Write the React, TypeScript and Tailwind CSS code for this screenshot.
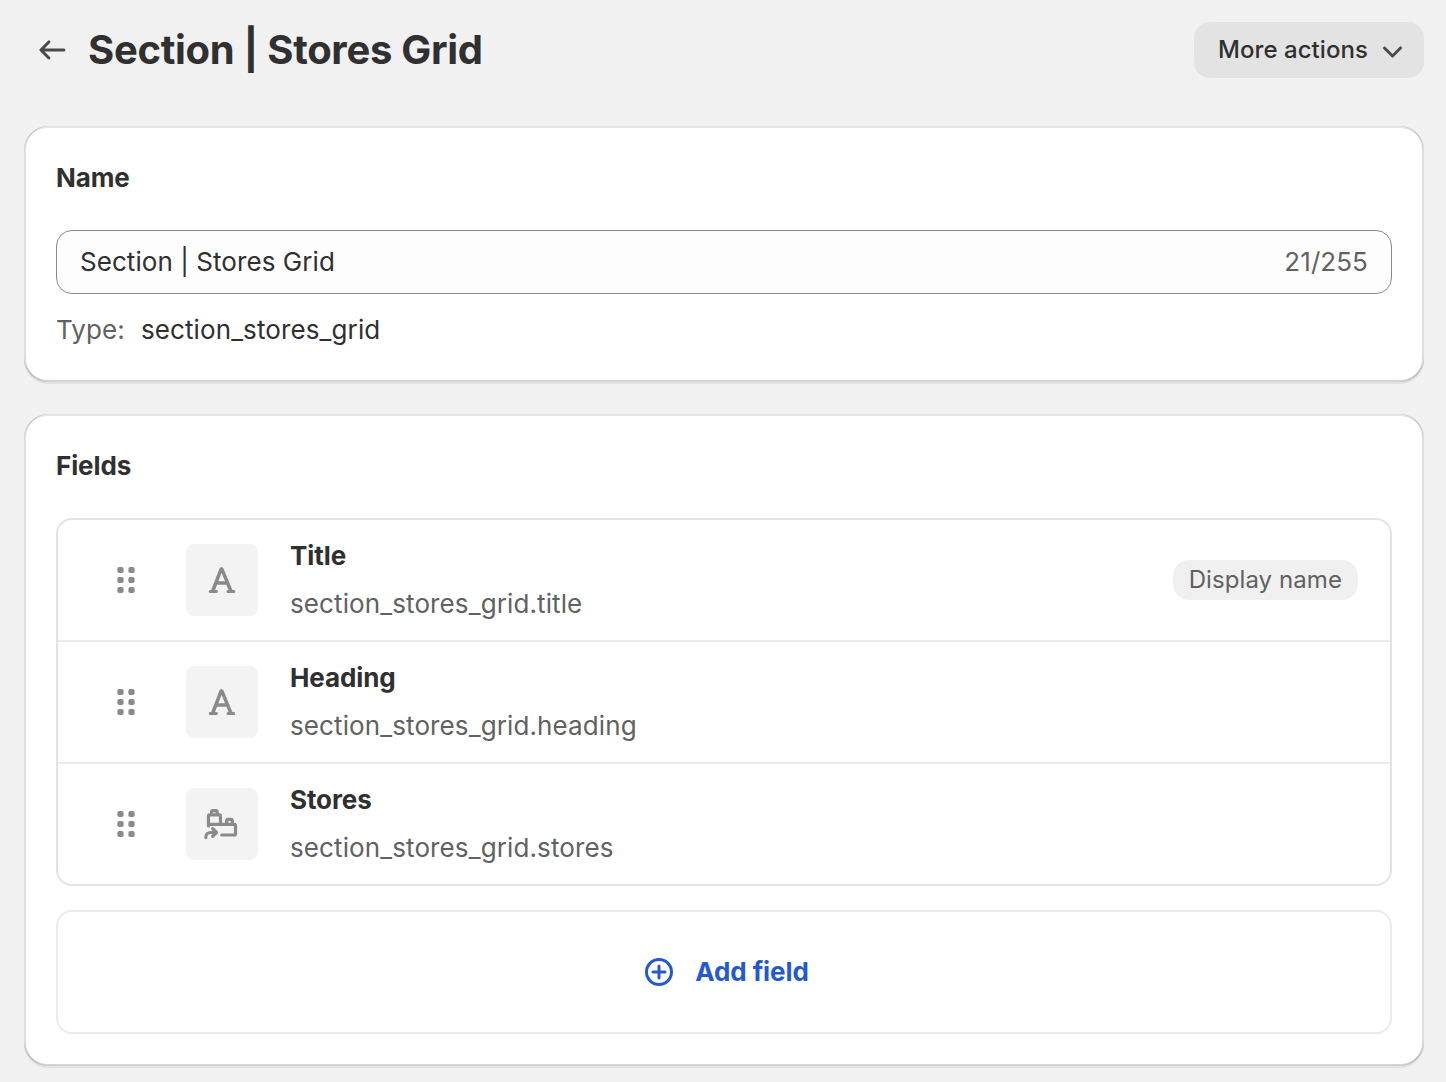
import type { ReactNode } from "react";

const cardClass =
  "rounded-[24px] bg-white px-8 shadow-[0_2px_0_0_rgba(26,26,26,0.07),inset_2px_0_0_0_rgba(0,0,0,0.13),inset_-2px_0_0_0_rgba(0,0,0,0.13),inset_0_-2px_0_0_rgba(0,0,0,0.17),inset_0_2px_0_0_rgba(204,204,204,0.5)]";

function ArrowLeftIcon() {
  return (
    <svg viewBox="0 0 20 20" className="size-10 shrink-0" fill="#4a4a4a">
      <path d="M16.7 10a.75.75 0 0 1-.75.75h-9.69l2.72 2.72a.75.75 0 0 1-1.06 1.06l-4-4a.75.75 0 0 1 0-1.06l4-4a.75.75 0 1 1 1.06 1.06l-2.72 2.72h9.69a.75.75 0 0 1 .75.75Z" />
    </svg>
  );
}

function ChevronDownIcon() {
  return (
    <svg viewBox="0 0 20 20" className="size-10 shrink-0" fill="#4a4a4a">
      <path d="M5.72 8.47a.75.75 0 0 1 1.06 0l3.47 3.47 3.47-3.47a.75.75 0 1 1 1.06 1.06l-4 4a.75.75 0 0 1-1.06 0l-4-4a.75.75 0 0 1 0-1.06Z" />
    </svg>
  );
}

function DragHandleIcon() {
  return (
    <svg viewBox="0 0 20 20" className="size-10 shrink-0" fill="#8a8a8a">
      {[3.5, 8.5, 13.5].map((y) => (
        <g key={y}>
          <rect x="5.7" y={y} width="3.1" height="3" rx="0.9" />
          <rect x="11.2" y={y} width="3.1" height="3" rx="0.9" />
        </g>
      ))}
    </svg>
  );
}

function TextFieldIcon() {
  return (
    <svg
      viewBox="0 0 20 20"
      className="size-10"
      fill="none"
      stroke="#8a8a8a"
      strokeWidth="1.75"
      strokeLinecap="round"
      strokeLinejoin="round"
    >
      <path d="M5.35 15.5 9.6 4.45h.3l4.55 11.05M6.9 11.5h6" />
      <path strokeWidth="1.5" d="M4.1 15.75h3.1M13 15.75h2.9" />
    </svg>
  );
}

function ReferenceListIcon() {
  return (
    <svg
      viewBox="0 0 20 20"
      className="size-10"
      fill="none"
      stroke="#8a8a8a"
      strokeWidth="1.6"
      strokeLinecap="round"
      strokeLinejoin="round"
    >
      <path d="M3.25 11V5.9a.5.5 0 0 1 .5-.5h5a.5.5 0 0 1 .5.5v4.3" />
      <path d="M4.8 5.2V3.95c0-.36.3-.65.65-.65h1.5c.36 0 .65.3.65.65V5.2" />
      <path d="M3.4 10.2h12.85a.5.5 0 0 1 .5.5v4.3a.5.5 0 0 1-.5.5H9.9" />
      <path d="M12.35 9.9V8.3c0-.36.3-.65.65-.65h1.5c.36 0 .65.3.65.65v1.6" />
      <path d="M1.95 16.8v-.4c0-1.2 1-2.15 2.2-2.15H7M5.3 12.3l1.95 1.95L5.3 16.2" />
    </svg>
  );
}

function PlusCircleIcon() {
  return (
    <svg
      viewBox="0 0 20 20"
      className="size-10 shrink-0"
      fill="none"
      stroke="#2459d0"
      strokeWidth="1.5"
      strokeLinecap="round"
    >
      <circle cx="10" cy="10" r="6.25" />
      <path d="M10 7v6M7 10h6" />
    </svg>
  );
}

type FieldProps = { name: string; path: string; icon: ReactNode; badge?: string };

const fields: FieldProps[] = [
  { name: "Title", path: "section_stores_grid.title", icon: <TextFieldIcon />, badge: "Display name" },
  { name: "Heading", path: "section_stores_grid.heading", icon: <TextFieldIcon /> },
  { name: "Stores", path: "section_stores_grid.stores", icon: <ReferenceListIcon /> },
];

function FieldRow({ name, path, icon, badge }: FieldProps) {
  return (
    <li className="box-content flex h-[120px] items-center pr-8 pl-12">
      <DragHandleIcon />
      <div className="ml-10 flex size-[72px] shrink-0 items-center justify-center rounded-lg bg-[#f3f3f3]">
        {icon}
      </div>
      <div className="ml-8 flex flex-1 flex-col gap-2">
        <span className="text-[26px] leading-10 font-bold tracking-[-0.1px]">{name}</span>
        <span className="text-[26px] leading-10 tracking-[0.11px] text-[#616161]">{path}</span>
      </div>
      {badge && (
        <span className="flex h-10 items-center rounded-2xl bg-[#f0f0f0] px-4 text-[24px] leading-8 tracking-[0.08px] text-[#616161]">
          {badge}
        </span>
      )}
    </li>
  );
}

export default function App() {
  return (
    <div className="h-[1082px] w-[1446px] overflow-hidden bg-[#f1f1f1] pr-[22px] pl-6 font-['Inter',sans-serif] text-[26px] text-[#303030]">
      <header className="flex h-[126px] items-start justify-between pt-[22px]">
        <div className="flex h-14 items-center gap-4 pl-2">
          <ArrowLeftIcon />
          <h1 className="text-[40px] leading-[48px] font-bold tracking-[-0.3px]">Section | Stores Grid</h1>
        </div>
        <button className="flex h-14 w-[230px] items-center justify-between rounded-2xl bg-[#e3e3e3] pr-3 pl-6 text-[24px] font-medium tracking-[0.06px]">
          More actions
          <ChevronDownIcon />
        </button>
      </header>

      <main className="flex flex-col gap-8">
        <section className={`${cardClass} h-64 pt-8`}>
          <h2 className="text-[26px] leading-10 font-bold tracking-[-0.1px]">Name</h2>
          <div className="mt-8 flex h-16 items-center justify-between rounded-2xl border border-[#8a8a8a] bg-[#fdfdfd] px-[23px] leading-10 tracking-[0.06px]">
            <span>Section | Stores Grid</span>
            <span className="text-[#616161]">21/255</span>
          </div>
          <p className="mt-4 flex gap-4 leading-10 tracking-[0.11px]">
            <span className="text-[#616161]">Type:</span>
            <span>section_stores_grid</span>
          </p>
        </section>

        <section className={`${cardClass} h-[652px] pt-8`}>
          <h2 className="text-[26px] leading-10 font-bold tracking-[-0.1px]">Fields</h2>
          <ul className="mt-8 divide-y-2 divide-[#ebebeb] rounded-2xl border-2 border-[#e3e3e3]">
            {fields.map((field) => (
              <FieldRow key={field.name} {...field} />
            ))}
          </ul>
          <button className="mt-6 flex h-[124px] w-full items-center justify-center gap-4 rounded-2xl border-2 border-[#ebebeb] leading-10 font-bold tracking-[-0.1px] text-[#2459d0]">
            <PlusCircleIcon />
            Add field
          </button>
        </section>
      </main>
    </div>
  );
}
